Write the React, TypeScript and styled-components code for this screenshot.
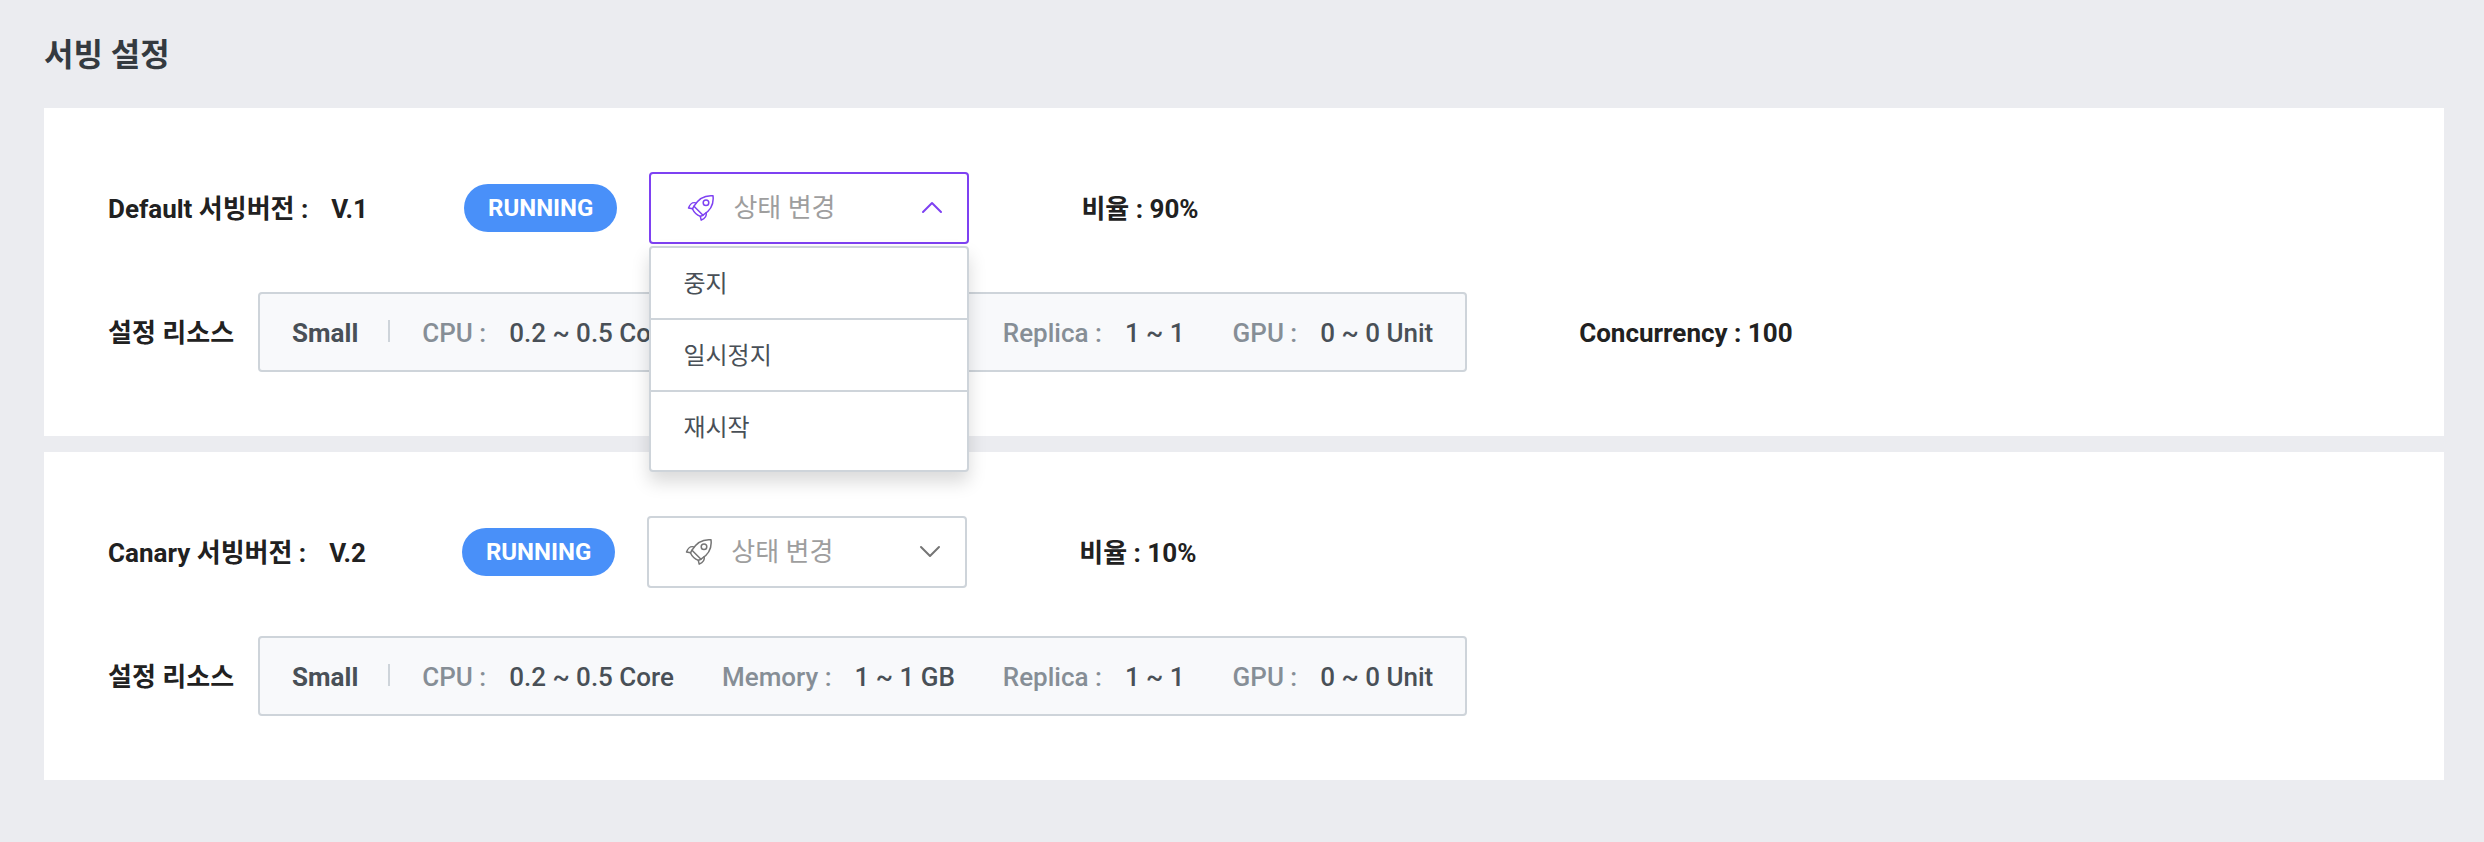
import React, { useState } from 'react';
import styled, { createGlobalStyle } from 'styled-components';

const color = {
  page: '#ebecf0',
  title: '#343a40',
  text: '#212121',
  value: '#495057',
  label: '#868e96',
  line: '#ced4da',
  panel: '#f8f9fb',
  badge: '#4990f9',
  accent: '#7e41f2',
  hint: '#9e9e9e',
  icon: '#757575',
};

const GlobalStyle = createGlobalStyle`
  *, *::before, *::after { box-sizing: border-box; }
  body {
    margin: 0;
    background: ${color.page};
    color: ${color.text};
    font-family: Roboto, 'Noto Sans CJK KR', sans-serif;
    font-size: 26px;
    line-height: 40px;
  }
  button { font: inherit; cursor: pointer; }
`;

const Page = styled.main`
  min-height: 100vh;
  padding: 32px 40px 62px 44px;
`;

const Title = styled.h1`
  margin: 0 0 30px;
  color: ${color.title};
  font-size: 32px;
  font-weight: 700;
  line-height: 46px;
`;

const CardList = styled.div`
  display: flex;
  flex-direction: column;
  gap: 16px;
`;

const Card = styled.section`
  display: flex;
  flex-direction: column;
  gap: 48px;
  padding: 64px;
  background: #fff;
`;

const Row = styled.div`
  display: flex;
  align-items: center;
  white-space: nowrap;
`;

const Heading = styled.h2`
  display: flex;
  gap: 23px;
  margin: 0 96px 0 0;
  padding-top: 2px;
  font-size: 26px;
  font-weight: 700;
  line-height: 40px;
`;

const Badge = styled.span`
  margin-right: 32px;
  padding: 0 24px;
  border-radius: 24px;
  background: ${color.badge};
  color: #fff;
  font-size: 24px;
  font-weight: 700;
  line-height: 48px;
`;

const Fact = styled.span`
  margin-left: 112px;
  padding-top: 2px;
  font-weight: 700;
`;

const RowLabel = styled.span`
  margin-right: 24px;
  padding-top: 2px;
  font-weight: 700;
`;

const ResourceBox = styled.div`
  display: flex;
  align-items: center;
  height: 80px;
  padding: 0 32px;
  border: 2px solid ${color.line};
  border-radius: 4px;
  background: ${color.panel};
`;

const Size = styled.strong`
  padding-top: 2px;
  color: ${color.value};
  font-weight: 700;
`;

const Divider = styled.span`
  width: 2px;
  height: 22px;
  margin: 0 32px 2px 30px;
  background: ${color.line};
`;

const SpecList = styled.dl`
  display: flex;
  gap: 48px;
  margin: 0;
  padding-top: 2px;
  font-weight: 500;
`;

const Spec = styled.div`
  display: flex;
  gap: 23px;
`;

const SpecName = styled.dt`
  color: ${color.label};
`;

const SpecValue = styled.dd`
  margin: 0;
  color: ${color.value};
`;

const Dropdown = styled.div`
  position: relative;
  width: 320px;
`;

const DropdownButton = styled.button<{ $open: boolean }>`
  display: flex;
  align-items: center;
  width: 100%;
  height: 72px;
  padding: 0 24px 0 36px;
  border: 2px solid ${(p) => (p.$open ? color.accent : color.line)};
  border-radius: 4px;
  background: #fff;
  color: ${(p) => (p.$open ? color.accent : color.icon)};
`;

const DropdownText = styled.span`
  flex: 1;
  margin-left: 18px;
  color: ${color.hint};
  text-align: left;
`;

const Menu = styled.ul`
  position: absolute;
  z-index: 1;
  top: 100%;
  left: 0;
  width: 100%;
  margin: 2px 0 0;
  padding: 0 0 8px;
  border: 2px solid ${color.line};
  border-radius: 4px;
  background: #fff;
  box-shadow: 0 10px 18px rgba(0, 0, 0, 0.15);
  list-style: none;
`;

const MenuEntry = styled.li`
  & + & { border-top: 2px solid ${color.line}; }
`;

const MenuButton = styled.button`
  display: block;
  width: 100%;
  height: 70px;
  padding: 2px 32px 0;
  border: 0;
  background: none;
  color: ${color.value};
  font-size: 24px;
  text-align: left;
`;

const RocketIcon = () => (
  <svg width="28" height="28" viewBox="0 0 28 28" fill="none" stroke="currentColor" strokeWidth="1.5" strokeLinejoin="round" strokeLinecap="round" aria-hidden="true">
    <path d="M26 1.8C18 1 11.5 4.5 7 12.2l9 9C23.4 16.6 27 9.5 26 1.8Z" />
    <path d="M7 12.2L5.4 14.8C7 18.4 9.700 21 13.4 22.4L16 21.2" />
    <path d="M8.8 8.9C5.5 8 3.6 8.8 1.5 14L5.7 14.7" />
    <path d="M19.2 18.8C19.8 22.2 18.5 24.3 14.2 26.1L13.3 22.3" />
    <circle cx="19" cy="8.8" r="2.8" />
  </svg>
);

const Chevron = ({ up }: { up: boolean }) => (
  <svg width="22" height="14" viewBox="0 0 22 14" fill="none" stroke="currentColor" strokeWidth="2" strokeLinejoin="round" strokeLinecap="round" aria-hidden="true">
    <path d={up ? 'M2 11l9-9 9 9' : 'M2 2l9 9 9-9'} />
  </svg>
);

const actions = ['중지', '일시정지', '재시작'];

function StateDropdown({ initiallyOpen }: { initiallyOpen: boolean }) {
  const [open, setOpen] = useState(initiallyOpen);
  return (
    <Dropdown>
      <DropdownButton type="button" $open={open} aria-haspopup="true" aria-expanded={open} onClick={() => setOpen(!open)}>
        <RocketIcon />
        <DropdownText>상태 변경</DropdownText>
        <Chevron up={open} />
      </DropdownButton>
      {open && (
        <Menu>
          {actions.map((action) => (
            <MenuEntry key={action}>
              <MenuButton type="button" onClick={() => setOpen(false)}>{action}</MenuButton>
            </MenuEntry>
          ))}
        </Menu>
      )}
    </Dropdown>
  );
}

const specs = [
  { name: 'CPU :', value: '0.2 ~ 0.5 Core' },
  { name: 'Memory :', value: '1 ~ 1 GB' },
  { name: 'Replica :', value: '1 ~ 1' },
  { name: 'GPU :', value: '0 ~ 0 Unit' },
];

interface Serving {
  name: string;
  version: string;
  ratio: string;
  concurrency?: number;
  menuOpen: boolean;
}

const servings: Serving[] = [
  { name: 'Default', version: 'V.1', ratio: '90%', concurrency: 100, menuOpen: true },
  { name: 'Canary', version: 'V.2', ratio: '10%', menuOpen: false },
];

function ServingCard({ name, version, ratio, concurrency, menuOpen }: Serving) {
  return (
    <Card>
      <Row>
        <Heading>
          <span>{`${name} 서빙버전 :`}</span>
          <span>{version}</span>
        </Heading>
        <Badge>RUNNING</Badge>
        <StateDropdown initiallyOpen={menuOpen} />
        <Fact>{`비율 : ${ratio}`}</Fact>
      </Row>
      <Row>
        <RowLabel>설정 리소스</RowLabel>
        <ResourceBox>
          <Size>Small</Size>
          <Divider />
          <SpecList>
            {specs.map((spec) => (
              <Spec key={spec.name}>
                <SpecName>{spec.name}</SpecName>
                <SpecValue>{spec.value}</SpecValue>
              </Spec>
            ))}
          </SpecList>
        </ResourceBox>
        {concurrency !== undefined && <Fact>{`Concurrency : ${concurrency}`}</Fact>}
      </Row>
    </Card>
  );
}

export default function App() {
  return (
    <>
      <GlobalStyle />
      <Page>
        <Title>서빙 설정</Title>
        <CardList>
          {servings.map((serving) => (
            <ServingCard key={serving.name} {...serving} />
          ))}
        </CardList>
      </Page>
    </>
  );
}
